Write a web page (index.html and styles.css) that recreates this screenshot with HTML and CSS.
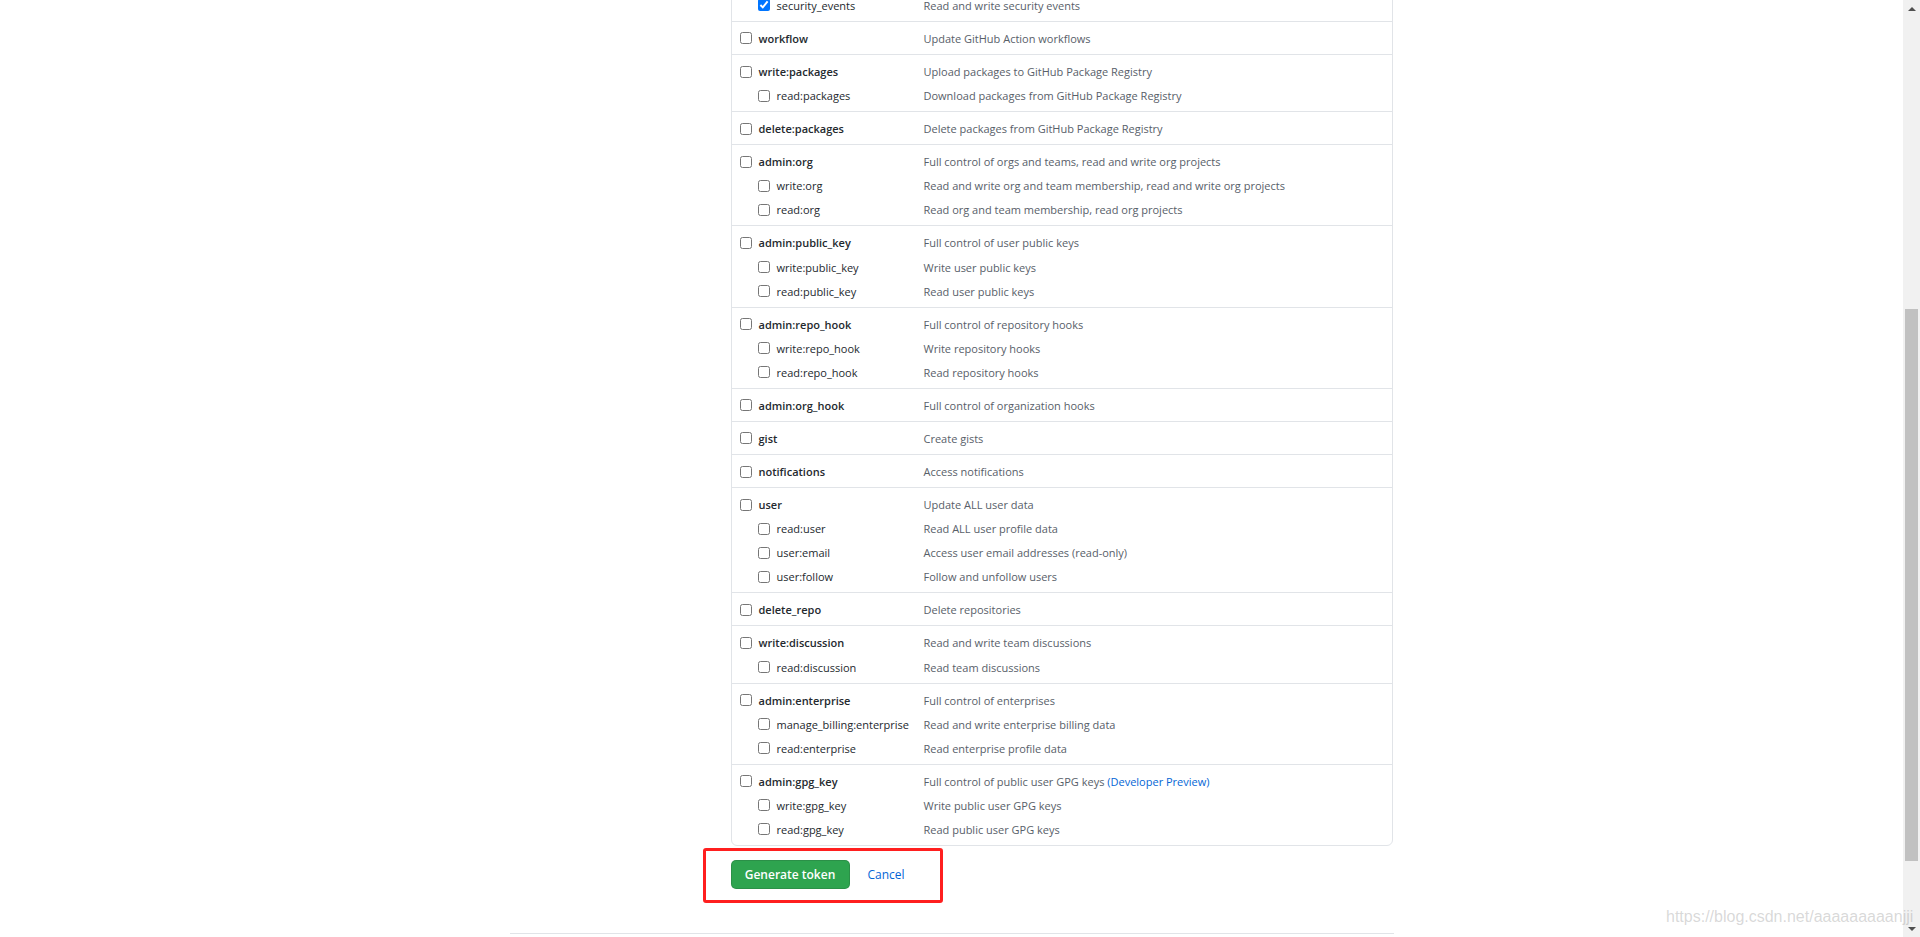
FILE: index.html
```html
<!DOCTYPE html>
<html lang="en">
<head>
<meta charset="utf-8">
<title>New personal access token</title>
<link rel="stylesheet" href="styles.css">
</head>
<body>
<div class="viewport">
  <div class="page">
    <div class="container">
      <aside class="sidebar"></aside>
      <main class="main">
        <div class="scopes">
          <div class="group">
            <div class="item sub"><label class="name"><input class="cb" type="checkbox" checked>security_events</label><span class="desc">Read and write security events</span></div>
          </div>
          <div class="group">
            <div class="item top"><label class="name"><input class="cb" type="checkbox">workflow</label><span class="desc">Update GitHub Action workflows</span></div>
          </div>
          <div class="group">
            <div class="item top"><label class="name"><input class="cb" type="checkbox">write:packages</label><span class="desc">Upload packages to GitHub Package Registry</span></div>
            <div class="item sub"><label class="name"><input class="cb" type="checkbox">read:packages</label><span class="desc">Download packages from GitHub Package Registry</span></div>
          </div>
          <div class="group">
            <div class="item top"><label class="name"><input class="cb" type="checkbox">delete:packages</label><span class="desc">Delete packages from GitHub Package Registry</span></div>
          </div>
          <div class="group">
            <div class="item top"><label class="name"><input class="cb" type="checkbox">admin:org</label><span class="desc">Full control of orgs and teams, read and write org projects</span></div>
            <div class="item sub"><label class="name"><input class="cb" type="checkbox">write:org</label><span class="desc">Read and write org and team membership, read and write org projects</span></div>
            <div class="item sub"><label class="name"><input class="cb" type="checkbox">read:org</label><span class="desc">Read org and team membership, read org projects</span></div>
          </div>
          <div class="group">
            <div class="item top"><label class="name"><input class="cb" type="checkbox">admin:public_key</label><span class="desc">Full control of user public keys</span></div>
            <div class="item sub"><label class="name"><input class="cb" type="checkbox">write:public_key</label><span class="desc">Write user public keys</span></div>
            <div class="item sub"><label class="name"><input class="cb" type="checkbox">read:public_key</label><span class="desc">Read user public keys</span></div>
          </div>
          <div class="group">
            <div class="item top"><label class="name"><input class="cb" type="checkbox">admin:repo_hook</label><span class="desc">Full control of repository hooks</span></div>
            <div class="item sub"><label class="name"><input class="cb" type="checkbox">write:repo_hook</label><span class="desc">Write repository hooks</span></div>
            <div class="item sub"><label class="name"><input class="cb" type="checkbox">read:repo_hook</label><span class="desc">Read repository hooks</span></div>
          </div>
          <div class="group">
            <div class="item top"><label class="name"><input class="cb" type="checkbox">admin:org_hook</label><span class="desc">Full control of organization hooks</span></div>
          </div>
          <div class="group">
            <div class="item top"><label class="name"><input class="cb" type="checkbox">gist</label><span class="desc">Create gists</span></div>
          </div>
          <div class="group">
            <div class="item top"><label class="name"><input class="cb" type="checkbox">notifications</label><span class="desc">Access notifications</span></div>
          </div>
          <div class="group">
            <div class="item top"><label class="name"><input class="cb" type="checkbox">user</label><span class="desc">Update ALL user data</span></div>
            <div class="item sub"><label class="name"><input class="cb" type="checkbox">read:user</label><span class="desc">Read ALL user profile data</span></div>
            <div class="item sub"><label class="name"><input class="cb" type="checkbox">user:email</label><span class="desc">Access user email addresses (read-only)</span></div>
            <div class="item sub"><label class="name"><input class="cb" type="checkbox">user:follow</label><span class="desc">Follow and unfollow users</span></div>
          </div>
          <div class="group">
            <div class="item top"><label class="name"><input class="cb" type="checkbox">delete_repo</label><span class="desc">Delete repositories</span></div>
          </div>
          <div class="group">
            <div class="item top"><label class="name"><input class="cb" type="checkbox">write:discussion</label><span class="desc">Read and write team discussions</span></div>
            <div class="item sub"><label class="name"><input class="cb" type="checkbox">read:discussion</label><span class="desc">Read team discussions</span></div>
          </div>
          <div class="group">
            <div class="item top"><label class="name"><input class="cb" type="checkbox">admin:enterprise</label><span class="desc">Full control of enterprises</span></div>
            <div class="item sub"><label class="name"><input class="cb" type="checkbox">manage_billing:enterprise</label><span class="desc">Read and write enterprise billing data</span></div>
            <div class="item sub"><label class="name"><input class="cb" type="checkbox">read:enterprise</label><span class="desc">Read enterprise profile data</span></div>
          </div>
          <div class="group">
            <div class="item top"><label class="name"><input class="cb" type="checkbox">admin:gpg_key</label><span class="desc">Full control of public user GPG keys <a class="link" href="#">(Developer Preview)</a></span></div>
            <div class="item sub"><label class="name"><input class="cb" type="checkbox">write:gpg_key</label><span class="desc">Write public user GPG keys</span></div>
            <div class="item sub"><label class="name"><input class="cb" type="checkbox">read:gpg_key</label><span class="desc">Read public user GPG keys</span></div>
          </div>
        </div>
        <div class="actions">
          <button class="btn-primary" type="button">Generate token</button>
          <a class="cancel" href="#">Cancel</a>
        </div>
      </main>
    </div>
    <footer class="footer"></footer>
  </div>
  <div class="scrollbar">
    <div class="sb-btn"><span class="arrow-up"></span></div>
    <div class="sb-track"><div class="sb-thumb"></div></div>
    <div class="sb-btn"><span class="arrow-down"></span></div>
  </div>
</div>
<div class="annotation"></div>
<div class="watermark">https://blog.csdn.net/aaaaaaaaanjji</div>
</body>
</html>
```

FILE: styles.css
```css
* { box-sizing: border-box; }
html, body { margin: 0; padding: 0; height: 100%; overflow: hidden; background: #fff; }
body { font-family: "Open Sans", "Liberation Sans", sans-serif; color: #24292e; }

.viewport { display: flex; height: 937px; }
.page { flex: 1; min-width: 0; overflow: hidden; }
.container { width: 884px; margin: 0 auto; display: grid; grid-template-columns: 221px 662px; }

/* page is scrolled: only the last item of the first (repo) group is visible */
.scopes { margin-top: -17.2px; border: 1px solid #e1e4e8; border-radius: 6px; }
.group { padding: 7px 8px 6.1px; }
.group + .group { border-top: 1px solid #e1e4e8; }

.item { display: grid; grid-template-columns: 184px 1fr; height: 19px; align-items: center; }
.item.sub { margin-top: 5.05px; }
.name { display: flex; align-items: center; font-size: 11px; white-space: nowrap; color: #24292e; }
.item.top .name { font-weight: 600; }
.item.sub .name { padding-left: 18px; }
.cb { width: 12px; height: 12px; margin: 0 7px 0 0; flex: none; }
.desc { font-size: 11px; color: #586069; white-space: nowrap; }
.link { color: #0366d6; text-decoration: none; }

.actions { display: flex; align-items: center; margin-top: 14px; }
.btn-primary {
  width: 119px; height: 29px; padding: 0;
  background: #2ea44f; color: #fff;
  border: 1px solid rgba(27, 31, 35, 0.15); border-radius: 5px;
  font-family: inherit; font-size: 12px; font-weight: 600;
}
.cancel { margin-left: 18px; color: #0366d6; font-size: 12px; text-decoration: none; }

.footer { width: 884px; margin: 44px auto 0; border-top: 1px solid #e1e4e8; height: 20px; }

.scrollbar { width: 17px; flex: none; background: #f1f1f1; display: flex; flex-direction: column; }
.sb-btn { height: 17px; display: flex; align-items: center; justify-content: center; }
.arrow-up { width: 0; height: 0; border-left: 4px solid transparent; border-right: 4px solid transparent; border-bottom: 4px solid #505050; }
.arrow-down { width: 0; height: 0; border-left: 4px solid transparent; border-right: 4px solid transparent; border-top: 4px solid #505050; }
.sb-track { flex: 1; }
.sb-thumb { margin: 292px 2px 0; height: 552px; background: #c1c1c1; }

.annotation {
  position: absolute; left: 703px; top: 848px; width: 240px; height: 55px;
  border: 3px solid #ff1f1f; border-radius: 3px;
}
.watermark {
  position: absolute; left: 1666px; top: 908px;
  font-family: "Liberation Sans", Arial, sans-serif; font-size: 16px; line-height: 18px;
  color: rgba(170, 170, 170, 0.45); white-space: nowrap;
}
```
